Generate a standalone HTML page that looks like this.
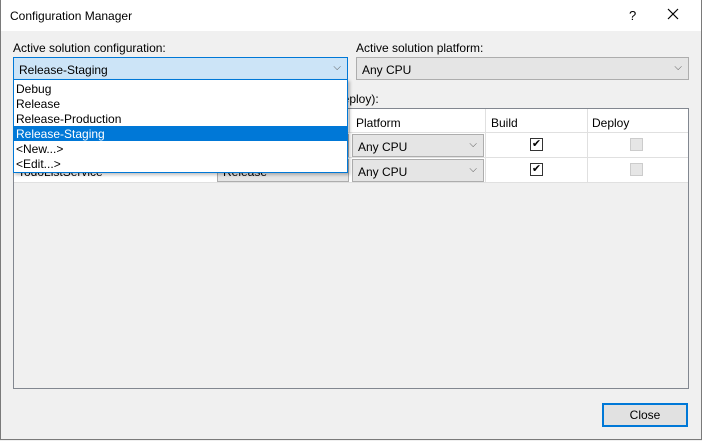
<html><head><style>
body{margin:0;width:702px;height:441px;background:#f0f0f0;font-family:"Liberation Sans",sans-serif;font-size:12px;color:#000;position:relative;overflow:hidden}
.a{position:absolute}
.combo{position:absolute;border:1px solid #adadad;background:#e5e5e5;box-sizing:border-box;height:23px;padding:4px 0 0 5px}
.chev{position:absolute;right:6px;top:4px;color:#555;font-size:10px}
.cb{position:absolute;width:13px;height:13px;box-sizing:border-box;border:1px solid #333;background:#fff;font-size:11px;line-height:11px;text-align:center}
.cbd{border-color:#ccc;background:#e6e6e6}
</style></head><body>
<div class="a" style="left:0;top:0;width:700px;height:439px;border:1px solid #7a7a7a;border-top:none"></div>
<div class="a" style="left:1px;top:0;width:700px;height:31px;background:#fff"></div>
<div class="a" style="left:10px;top:9px;font-size:12px">Configuration Manager</div>
<div class="a" style="left:629px;top:8px;font-size:13px">?</div>
<svg class="a" style="left:667px;top:8px" width="12" height="12"><path d="M1 1L11 11M11 1L1 11" stroke="#000" stroke-width="1.2"/></svg>
<div class="a" style="left:13px;top:41px">Active solution configuration:</div>
<div class="a" style="left:356px;top:41px">Active solution platform:</div>
<div class="combo" style="left:13px;top:57px;width:335px;background:#cce4f7;border-color:#0078d7;padding-top:5px">Release-Staging<span class="chev">⌵</span></div>
<div class="combo" style="left:356px;top:57px;width:333px;padding-top:5px">Any CPU<span class="chev">⌵</span></div>
<div class="a" style="left:330px;top:92px">(Deploy):</div>
<div class="a" style="left:13px;top:108px;width:676px;height:281px;border:1px solid #828790;box-sizing:border-box;background:#f0f0f0"></div>
<div class="a" style="left:14px;top:109px;width:674px;height:74px;background:#fff"></div>
<div class="a" style="left:14px;top:132px;width:674px;height:1px;background:#e0e0e0"></div>
<div class="a" style="left:14px;top:157px;width:674px;height:1px;background:#e0e0e0"></div>
<div class="a" style="left:14px;top:182px;width:674px;height:1px;background:#e0e0e0"></div>
<div class="a" style="left:485px;top:109px;width:1px;height:73px;background:#e0e0e0"></div>
<div class="a" style="left:587px;top:109px;width:1px;height:73px;background:#e0e0e0"></div>
<div class="a" style="left:349px;top:109px;width:1px;height:23px;background:#e0e0e0"></div>
<div class="a" style="left:356px;top:116px">Platform</div>
<div class="a" style="left:491px;top:116px">Build</div>
<div class="a" style="left:592px;top:116px">Deploy</div>
<div class="a" style="left:18px;top:165px">TodoListService</div>
<div class="combo" style="left:217px;top:134px;width:132px;padding-top:5px">Release</div>
<div class="combo" style="left:217px;top:159px;width:132px;padding-top:5px">Release</div>
<div class="combo" style="left:352px;top:134px;width:132px;padding-top:5px">Any CPU<span class="chev">⌵</span></div>
<div class="combo" style="left:352px;top:159px;width:132px;padding-top:5px">Any CPU<span class="chev">⌵</span></div>
<div class="cb" style="left:530px;top:138px">✔</div>
<div class="cb" style="left:530px;top:163px">✔</div>
<div class="cb cbd" style="left:630px;top:138px"></div>
<div class="cb cbd" style="left:630px;top:163px"></div>
<div class="a" style="left:13px;top:79px;width:335px;height:94px;background:#fff;border:1px solid #0078d7;box-sizing:border-box;box-shadow:2px 2px 3px rgba(0,0,0,.25)"></div>
<div class="a" style="left:14px;top:126px;width:333px;height:15px;background:#0078d7"></div>
<div class="a" style="left:16px;top:82px;line-height:15px">Debug<br>Release<br>Release-Production<br><span style="color:#fff">Release-Staging</span><br>&lt;New...&gt;<br>&lt;Edit...&gt;</div>
<div class="a" style="left:602px;top:403px;width:86px;height:24px;box-sizing:border-box;border:2px solid #0078d7;background:#e1e1e1;text-align:center;line-height:21px">Close</div>
</body></html>
